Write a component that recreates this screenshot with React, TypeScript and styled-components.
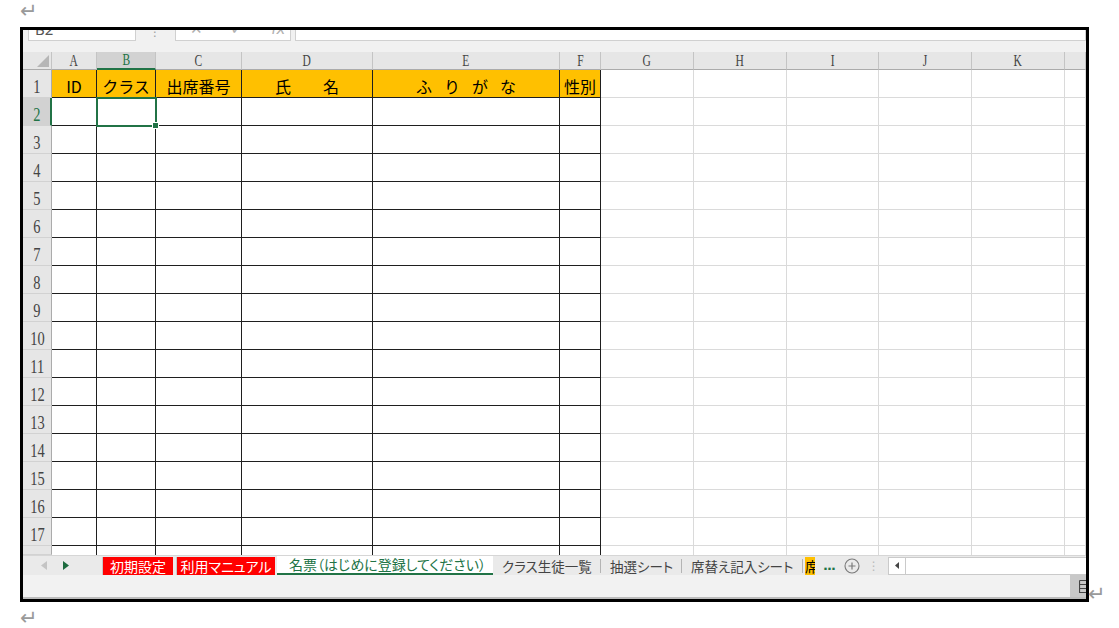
import styled, { createGlobalStyle } from "styled-components";

const GlobalStyle = createGlobalStyle`
  html, body {
    margin: 0;
    padding: 0;
    background: #fff;
  }
  body {
    font-family: "Noto Sans CJK JP", "Noto Sans", sans-serif;
  }
`;

const GREEN = "#217346";
const DARK = "#1f1f1f";
const LIGHT = "#dadada";

const Page = styled.div`
  width: 1119px;
  height: 628px;
  padding-left: 20px;
  box-sizing: border-box;
  overflow: hidden;
`;

const ReturnMark = styled.div<{ $top: number; $h: number }>`
  height: ${(p) => p.$h}px;
  padding-top: ${(p) => p.$top}px;
  box-sizing: border-box;
  color: #9a9a9a;
  font: 21px/16px "DejaVu Sans", sans-serif;
`;

const Middle = styled.div`
  display: flex;
  align-items: flex-end;
`;

const SideMark = styled.span`
  color: #9a9a9a;
  font: 21px/16px "DejaVu Sans", sans-serif;
  margin-bottom: 0;
  margin-left: -1px;
`;

const Frame = styled.div`
  width: 1069px;
  height: 575px;
  border: 3px solid #000;
  box-sizing: border-box;
  display: flex;
  flex-direction: column;
  overflow: hidden;
  background: #fff;
`;

/* formula bar (only its lower edge is visible) */
const FormulaBar = styled.div`
  height: 22px;
  flex: none;
  display: flex;
  align-items: flex-start;
  background: #f1f1f1;
  overflow: hidden;
`;

const FormulaBox = styled.div<{ $w?: number; $ml: number }>`
  height: 23px;
  margin-top: -12px;
  margin-left: ${(p) => p.$ml}px;
  width: ${(p) => (p.$w ? `${p.$w}px` : "auto")};
  flex: ${(p) => (p.$w ? "none" : "1")};
  box-sizing: border-box;
  background: #fff;
  border: 1px solid #d0d0d0;
  display: flex;
  align-items: center;
  gap: 28px;
  padding-left: 6px;
  color: #555;
  font: 15px/21px "Noto Sans", sans-serif;
`;

const ToolGlyph = styled.span`
  color: #b0b0b0;
  font: 15px/21px "DejaVu Sans", sans-serif;
`;

const Grip = styled.span`
  margin-left: 13px;
  margin-top: -4px;
  color: #a0a0a0;
  font: 12px/12px "DejaVu Sans", sans-serif;
`;

/* the sheet grid */
const Sheet = styled.div`
  flex: 1;
  display: grid;
  grid-template-columns: 29px 45px 59px 86px 131px 187px 41px 93px 93px 92px 93px 93px 1fr;
  grid-template-rows: 18px 28px repeat(16, 28px) 1fr;
  overflow: hidden;
`;

const Corner = styled.div`
  background: #e6e6e6;
  border-right: 1px solid #c4c4c4;
  border-bottom: 1px solid #ababab;
  display: flex;
  align-items: flex-end;
  justify-content: flex-end;
  padding: 0 2px 2px 0;
`;

const ColHead = styled.div<{ $sel?: boolean }>`
  background: ${(p) => (p.$sel ? "#d2d2d2" : "#e6e6e6")};
  border-right: 1px solid #c4c4c4;
  border-bottom: ${(p) => (p.$sel ? `2px solid ${GREEN}` : "1px solid #ababab")};
  color: ${(p) => (p.$sel ? GREEN : "#444")};
  display: flex;
  align-items: center;
  justify-content: center;
  font: 16px/16px "Liberation Serif", serif;
`;

const Thin = styled.span<{ $sx: number }>`
  display: inline-block;
  transform: scaleX(${(p) => p.$sx});
`;

const RowHead = styled.div<{ $sel?: boolean }>`
  background: ${(p) => (p.$sel ? "#d2d2d2" : "#e6e6e6")};
  border-right: ${(p) => (p.$sel ? `2px solid ${GREEN}` : "1px solid #ababab")};
  border-bottom: 1px solid #d2d2d2;
  color: ${(p) => (p.$sel ? GREEN : "#444")};
  display: flex;
  align-items: flex-end;
  justify-content: center;
  padding-bottom: 1px;
  font: 19px/18px "Liberation Serif", serif;
`;

const TitleCell = styled.div<{ $spacing?: number }>`
  background: #ffc000;
  border-right: 1px solid ${DARK};
  border-bottom: 1px solid ${DARK};
  color: #000;
  display: flex;
  align-items: center;
  justify-content: center;
  padding-top: 4px;
  font-size: 16px;
  font-weight: 400;
  letter-spacing: ${(p) => p.$spacing ?? 0}px;
  text-indent: ${(p) => p.$spacing ?? 0}px;
  white-space: nowrap;
`;

const Cell = styled.div<{ $line: string; $noBottom?: boolean; $active?: boolean }>`
  position: relative;
  border-right: 1px solid ${(p) => p.$line};
  border-bottom: ${(p) => (p.$noBottom ? "none" : `1px solid ${p.$line}`)};
  ${(p) =>
    p.$active &&
    `
    outline: 2px solid ${GREEN};
    outline-offset: -1px;
    z-index: 1;
  `}
`;

const FillHandle = styled.span`
  position: absolute;
  right: -4px;
  bottom: -4px;
  width: 5px;
  height: 5px;
  background: ${GREEN};
  border: 1px solid #fff;
`;

/* sheet tabs */
const TabBar = styled.div`
  height: 20px;
  flex: none;
  display: flex;
  align-items: center;
  background: #eaeaea;
  border-top: 1px solid #d6d6d6;
  box-sizing: border-box;
  font-feature-settings: "palt";
`;

const NavArea = styled.div`
  width: 76px;
  display: flex;
  align-items: center;
  gap: 16px;
  padding-left: 18px;
  box-sizing: border-box;
`;

const ColorTab = styled.div<{ $bg: string; $w: number }>`
  height: 18px;
  width: ${(p) => p.$w}px;
  margin-left: 4px;
  flex: none;
  background: ${(p) => p.$bg};
  color: #fff;
  display: flex;
  align-items: center;
  justify-content: center;
  font-size: 14px;
  line-height: 18px;
  box-shadow: -1px 0 0 #c8c8c8;
`;

const ActiveTab = styled.div`
  height: 19px;
  margin-left: 2px;
  padding: 0 12px;
  width: 216px;
  box-sizing: border-box;
  background: #fff;
  color: ${GREEN};
  border-bottom: 2px solid ${GREEN};
  display: flex;
  align-items: center;
  font-size: 14px;
  line-height: 17px;
  white-space: nowrap;
  overflow: hidden;
`;

const PlainTab = styled.div<{ $w: number }>`
  height: 14px;
  width: ${(p) => p.$w}px;
  box-sizing: border-box;
  padding-left: 9px;
  border-right: 1px solid #b4b4b4;
  color: #444;
  font-size: 13.5px;
  line-height: 14px;
  white-space: nowrap;
`;

const StubTab = styled.div`
  height: 18px;
  width: 10px;
  margin-left: 2px;
  background: #ffc000;
  overflow: hidden;
  color: #000;
  font-size: 14px;
  line-height: 18px;
  white-space: nowrap;
`;

const More = styled.span`
  margin-left: 8px;
  color: ${GREEN};
  font: bold 13px/18px "DejaVu Sans", sans-serif;
  letter-spacing: -1px;
`;

const AddSheet = styled.svg`
  margin-left: 9px;
  flex: none;
`;

const Splitter = styled.span`
  margin-left: 8px;
  color: #b8b8b8;
  font: 12px/12px "DejaVu Sans", sans-serif;
`;

const HScroll = styled.div`
  flex: 1;
  height: 16px;
  margin-left: 8px;
  display: flex;
  background: #fff;
  border: 1px solid #cacaca;
  border-right: none;
`;

const ScrollBtn = styled.div`
  width: 16px;
  border-right: 1px solid #cacaca;
  display: flex;
  align-items: center;
  justify-content: center;
`;

const StatusBar = styled.div`
  height: 24px;
  flex: none;
  display: flex;
  justify-content: flex-end;
  background: #f2f2f2;
  border-bottom: 2px solid #bcbcbc;
  box-sizing: border-box;
`;

const ViewButton = styled.div`
  width: 16px;
  background: #c8c8c8;
  display: flex;
  align-items: center;
  justify-content: flex-end;
`;

const columns = ["A", "B", "C", "D", "E", "F", "G", "H", "I", "J", "K", ""];
const titles: { text: string; spacing?: number }[] = [
  { text: "ID" },
  { text: "クラス" },
  { text: "出席番号" },
  { text: "氏　　名" },
  { text: "ふりがな", spacing: 12 },
  { text: "性別" },
];
const plainTabs = [
  { label: "クラス生徒一覧", w: 108 },
  { label: "抽選シート", w: 81 },
  { label: "席替え記入シート", w: 121 },
];

function Triangle({ dir, color }: { dir: "left" | "right"; color: string }) {
  return (
    <svg width="6" height="9" viewBox="0 0 6 9">
      <path d={dir === "right" ? "M0 0 L6 4.5 L0 9 Z" : "M6 0 L0 4.5 L6 9 Z"} fill={color} />
    </svg>
  );
}

export default function App() {
  const rows = Array.from({ length: 16 }, (_, i) => i + 2);

  return (
    <Page>
      <GlobalStyle />
      <ReturnMark $top={3} $h={27}>↵</ReturnMark>
      <Middle>
        <Frame>
          <FormulaBar>
            <FormulaBox $w={108} $ml={5}>B2</FormulaBox>
            <Grip>⋮</Grip>
            <FormulaBox $w={116} $ml={14} style={{ paddingLeft: 14 }}>
              <ToolGlyph>✕</ToolGlyph>
              <ToolGlyph>✓</ToolGlyph>
              <ToolGlyph style={{ fontStyle: "italic" }}>fx</ToolGlyph>
            </FormulaBox>
            <FormulaBox $ml={4} />
          </FormulaBar>

          <Sheet>
            <Corner>
              <svg width="12" height="12" viewBox="0 0 12 12">
                <path d="M12 0 L12 12 L0 12 Z" fill="#b6b6b6" />
              </svg>
            </Corner>
            {columns.map((c, i) => (
              <ColHead key={`h${i}`} $sel={c === "B"}>
                <Thin $sx={0.72}>{c}</Thin>
              </ColHead>
            ))}

            <RowHead>
              <Thin $sx={0.76}>1</Thin>
            </RowHead>
            {titles.map((t) => (
              <TitleCell key={t.text} $spacing={t.spacing}>
                {t.text}
              </TitleCell>
            ))}
            {Array.from({ length: 6 }, (_, i) => (
              <Cell key={`o1-${i}`} $line={LIGHT} />
            ))}

            {rows.map((r) => [
              <RowHead key={`r${r}`} $sel={r === 2}>
                <Thin $sx={0.76}>{r}</Thin>
              </RowHead>,
              ...Array.from({ length: 6 }, (_, i) => (
                <Cell key={`t${r}-${i}`} $line={DARK} $active={r === 2 && i === 1}>
                  {r === 2 && i === 1 && <FillHandle />}
                </Cell>
              )),
              ...Array.from({ length: 6 }, (_, i) => (
                <Cell key={`o${r}-${i}`} $line={LIGHT} />
              )),
            ])}

            <RowHead />
            {Array.from({ length: 12 }, (_, i) => (
              <Cell key={`p${i}`} $line={i < 6 ? DARK : LIGHT} $noBottom />
            ))}
          </Sheet>

          <TabBar>
            <NavArea>
              <Triangle dir="left" color="#c4c4c4" />
              <Triangle dir="right" color="#1d6b3f" />
            </NavArea>
            <ColorTab $bg="#ff0000" $w={70}>初期設定</ColorTab>
            <ColorTab $bg="#ff0000" $w={98}>利用マニュアル</ColorTab>
            <ActiveTab>名票（はじめに登録してください）</ActiveTab>
            {plainTabs.map((t) => (
              <PlainTab key={t.label} $w={t.w}>
                {t.label}
              </PlainTab>
            ))}
            <StubTab>席</StubTab>
            <More>...</More>
            <AddSheet width="16" height="16" viewBox="0 0 16 16">
              <circle cx="8" cy="8" r="7" fill="none" stroke="#7a7a7a" strokeWidth="1.1" />
              <path d="M8 4.5 V11.5 M4.5 8 H11.5" stroke="#7a7a7a" strokeWidth="1.2" />
            </AddSheet>
            <Splitter>⋮</Splitter>
            <HScroll>
              <ScrollBtn>
                <svg width="4" height="7" viewBox="0 0 4 7">
                  <path d="M4 0 L0 3.5 L4 7 Z" fill="#444" />
                </svg>
              </ScrollBtn>
            </HScroll>
          </TabBar>

          <StatusBar>
            <ViewButton>
              <svg width="7" height="13" viewBox="0 0 7 13">
                <path d="M0.5 0.5 H7 M0.5 0.5 V12.5 H7 M0.5 4.5 H7 M0.5 8.5 H7" stroke="#444" strokeWidth="1.2" fill="none" />
              </svg>
            </ViewButton>
          </StatusBar>
        </Frame>
        <SideMark>↵</SideMark>
      </Middle>
      <ReturnMark $top={8} $h={26}>↵</ReturnMark>
    </Page>
  );
}
